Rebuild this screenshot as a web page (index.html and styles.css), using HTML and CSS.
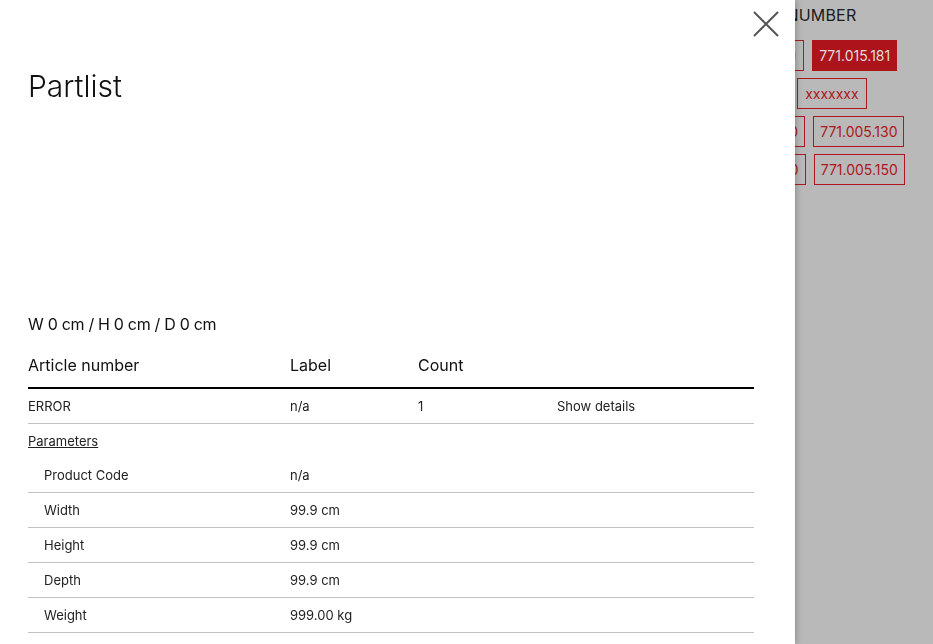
FILE: index.html
```html
<!DOCTYPE html>
<html lang="en">
<head>
<meta charset="utf-8">
<title>Partlist</title>
<link rel="stylesheet" href="styles.css">
</head>
<body>
<div class="page">
  <h2 class="page-heading">ARTICLE NUMBER</h2>
  <div class="chip-row">
    <span class="chip chip-wide">771.015.180</span>
    <span class="chip chip-active">771.015.181</span>
  </div>
  <div class="chip-row">
    <span class="chip">xxxxxxxx</span>
    <span class="chip chip-wide">xxxxxxx</span>
  </div>
  <div class="chip-row">
    <span class="chip">771.005.120</span>
    <span class="chip">771.005.130</span>
  </div>
  <div class="chip-row">
    <span class="chip">771.005.140</span>
    <span class="chip">771.005.150</span>
  </div>
</div>

<aside class="drawer">
  <button class="close" aria-label="Close">
    <svg width="26" height="26" viewBox="0 0 26 26"><path d="M1 1 L25 25 M25 1 L1 25" stroke="#555" stroke-width="2" fill="none"/></svg>
  </button>
  <h1 class="title">Partlist</h1>
  <div class="preview"></div>
  <p class="dims">W 0 cm / H 0 cm / D 0 cm</p>
  <table class="parts">
    <colgroup>
      <col class="c1"><col class="c2"><col class="c3"><col class="c4">
    </colgroup>
    <thead>
      <tr><th>Article number</th><th>Label</th><th>Count</th><th></th></tr>
    </thead>
    <tbody>
      <tr class="line"><td>ERROR</td><td>n/a</td><td>1</td><td>Show details</td></tr>
      <tr class="plain"><td colspan="4"><a class="params-link" href="#">Parameters</a></td></tr>
      <tr class="line param"><td>Product Code</td><td>n/a</td><td></td><td></td></tr>
      <tr class="line param"><td>Width</td><td>99.9 cm</td><td></td><td></td></tr>
      <tr class="line param"><td>Height</td><td>99.9 cm</td><td></td><td></td></tr>
      <tr class="line param"><td>Depth</td><td>99.9 cm</td><td></td><td></td></tr>
      <tr class="line param"><td>Weight</td><td>999.00 kg</td><td></td><td></td></tr>
    </tbody>
  </table>
</aside>
</body>
</html>
```

FILE: styles.css
```css
html, body {
  margin: 0;
  padding: 0;
  height: 100%;
  overflow: hidden;
}
body {
  background: #b9b9b9;
  font-family: Inter, "Noto Sans", "Liberation Sans", sans-serif;
  color: #1a1a1a;
}

/* background page (dimmed) */
.page {
  padding: 5px 0 0 714px;
  display: flex;
  flex-direction: column;
  gap: 7px;
}
.page-heading {
  margin: 0 0 8px 0;
  font-size: 16px;
  font-weight: 400;
  line-height: 20px;
  color: #1b1b1b;
  letter-spacing: 0.2px;
}
.chip-row {
  display: flex;
  gap: 8px;
}
.chip {
  display: inline-block;
  height: 29px;
  line-height: 29px;
  padding: 0 6px;
  border: 1px solid #ad1820;
  color: #ad1820;
  font-size: 14px;
}
.chip-wide {
  padding: 0 7px;
}
.chip-active {
  background: #ad131b;
  border-color: #ad131b;
  color: #dcdcdc;
  padding: 0 6px;
}

/* drawer */
.drawer {
  position: fixed;
  left: 0;
  top: 0;
  bottom: 0;
  width: 795px;
  box-sizing: border-box;
  padding: 0 41px 0 28px;
  background: #fff;
  box-shadow: 0 0 7px rgba(0, 0, 0, 0.35);
}
.close {
  position: absolute;
  left: 753px;
  top: 11px;
  width: 26px;
  height: 26px;
  padding: 0;
  border: 0;
  background: none;
}
.close svg { display: block; }

.title {
  margin: 0;
  padding-top: 68px;
  font-size: 30px;
  line-height: 36px;
  font-weight: 300;
  color: #111;
}
.preview {
  height: 210px;
}
.dims {
  margin: 0 0 11px 0;
  font-size: 16px;
  line-height: 20px;
  letter-spacing: -0.3px;
  color: #111;
}

.parts {
  width: 100%;
  border-collapse: collapse;
  table-layout: fixed;
  font-size: 13px;
}
.c1 { width: 262px; }
.c2 { width: 128px; }
.c3 { width: 139px; }
.parts th {
  text-align: left;
  font-weight: 400;
  font-size: 16px;
  line-height: 20px;
  padding: 10px 0 12px 0;
  color: #111;
  border-bottom: 2px solid #000;
}
.parts td {
  padding: 9px 0;
  line-height: 16px;
  color: #222;
  white-space: nowrap;
}
.parts tr.line td {
  border-bottom: 1px solid #c2c2c2;
}
.parts tr.param td:first-child {
  padding-left: 16px;
}
.params-link {
  color: #222;
  text-decoration: underline;
}
```
